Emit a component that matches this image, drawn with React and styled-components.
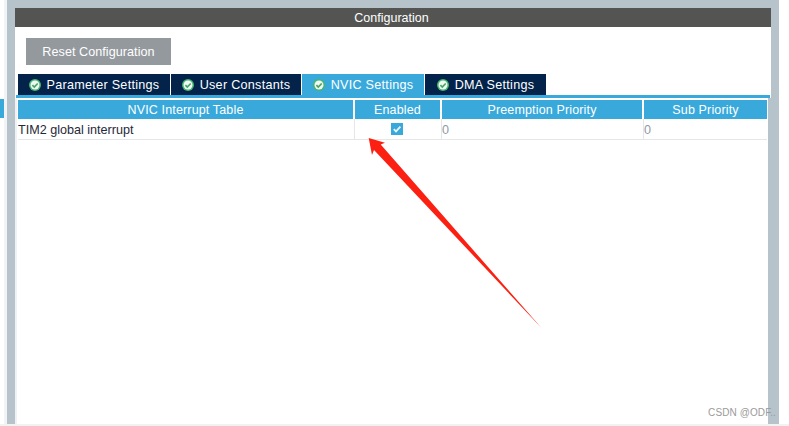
import styled, { createGlobalStyle } from 'styled-components';

const GlobalStyle = createGlobalStyle`
    html, body {
        margin: 0;
        padding: 0;
        background: #ffffff;
        overflow: hidden;
    }
    body {
        font-family: "Liberation Sans", Arial, sans-serif;
    }
`;

const Page = styled.div`
    position: relative;
    width: 789px;
    height: 426px;
    overflow: hidden;
    background: #ffffff;
`;

const Main = styled.div`
    display: flex;
    height: 424px;
`;

const BottomStrip = styled.div`
    height: 2px;
    background: #f1f2f2;
`;

const Gutter = styled.div`
    width: 7px;
    flex-shrink: 0;
    padding-top: 99px;
    box-sizing: border-box;
    background: linear-gradient(to right, #ffffff 4px, #f1f3f4 4px);
`;

const GutterMark = styled.div`
    width: 4px;
    height: 19px;
    background: #39a9dc;
`;

const Frame = styled.div`
    display: flex;
    flex-direction: column;
    width: 772px;
    flex-shrink: 0;
    box-sizing: border-box;
    padding: 8px 8px 0 8px;
    background: #b6c3ca;
`;

const TitleBar = styled.div`
    height: 19px;
    padding-right: 3px;
    background: #545553;
    color: #ffffff;
    font-size: 12.5px;
    line-height: 20px;
    text-align: center;
`;

const TopSection = styled.div`
    width: 756px;
    padding-top: 11px;
    box-sizing: border-box;
    background: #ffffff;
`;

const ResetButton = styled.button`
    display: block;
    width: 145px;
    height: 27px;
    margin: 0 0 9px 11px;
    padding: 0;
    border: 0;
    background: #94999e;
    color: #ffffff;
    font-family: inherit;
    font-size: 12.6px;
    letter-spacing: 0.05px;
`;

const TabBar = styled.div`
    display: flex;
    gap: 1px;
    width: 754px;
    margin-left: 1px;
    padding-left: 2px;
    box-sizing: border-box;
    border-bottom: 3px solid #39a9dc;
`;

const Tab = styled.div`
    display: flex;
    align-items: center;
    justify-content: center;
    gap: 6px;
    width: ${({ width }) => width}px;
    height: 21px;
    background: ${({ active }) => (active ? '#39a9dc' : '#03234b')};
    color: #ffffff;
    font-size: 12.6px;
    letter-spacing: 0.28px;
`;

const TableSection = styled.div`
    flex: 1;
    width: 753px;
    padding: 2px 0 0 1px;
    box-sizing: border-box;
    border-left: 2px solid #eff2f4;
    background: #ffffff;
`;

const Table = styled.div`
    display: grid;
    grid-template-columns: 335px 85px 200px 123px;
    column-gap: 2px;
    width: 749px;
`;

const HeadCell = styled.div`
    height: 19px;
    background: #39a9dc;
    color: #ffffff;
    font-size: 12.5px;
    line-height: 20px;
    letter-spacing: 0.15px;
    text-align: center;
`;

const BodyCell = styled.div`
    display: flex;
    align-items: center;
    justify-content: ${({ center }) => (center ? 'center' : 'flex-start')};
    height: 21px;
    margin-right: ${({ last }) => (last ? '0' : '-2px')};
    padding: ${({ center }) => (center ? '0 2px 0 0' : '1px 0 0 0')};
    box-sizing: border-box;
    border-bottom: 1px solid #e4e6e7;
    border-right: ${({ last }) => (last ? '0' : '1px solid #e4e6e7')};
    color: ${({ muted }) => (muted ? '#8e9aa8' : '#1f2a3a')};
    font-size: 12.6px;
`;

const CheckBox = styled.span`
    display: flex;
    align-items: center;
    justify-content: center;
    width: 12px;
    height: 12px;
    background: #39a9dc;
`;

const Arrow = styled.svg`
    position: absolute;
    left: 0;
    top: 0;
    pointer-events: none;
`;

const Watermark = styled.div`
    position: absolute;
    right: 13px;
    bottom: 8px;
    color: #9a9a9a;
    font-size: 10px;
    letter-spacing: 0.1px;
`;

const tabs = [
    { label: 'Parameter Settings', width: 152 },
    { label: 'User Constants', width: 130 },
    { label: 'NVIC Settings', width: 122, active: true },
    { label: 'DMA Settings', width: 121 },
];

function TabIcon() {
    return (
        <svg width="12" height="12" viewBox="0 0 12 12">
            <circle cx="6" cy="6" r="6" fill="#45b670" />
            <circle cx="6" cy="6" r="4.5" fill="#f2f7f3" />
            <path d="M3.4 6.1 L5.3 8 L8.7 4.5" fill="none" stroke="#45a468" strokeWidth="1.7" />
        </svg>
    );
}

export default function App() {
    return (
        <Page>
            <GlobalStyle />
            <Main>
                <Gutter>
                    <GutterMark />
                </Gutter>
                <Frame>
                    <TitleBar>Configuration</TitleBar>
                    <TopSection>
                        <ResetButton>Reset Configuration</ResetButton>
                        <TabBar>
                            {tabs.map((tab) => (
                                <Tab key={tab.label} width={tab.width} active={tab.active}>
                                    <TabIcon />
                                    {tab.label}
                                </Tab>
                            ))}
                        </TabBar>
                    </TopSection>
                    <TableSection>
                        <Table>
                            <HeadCell>NVIC Interrupt Table</HeadCell>
                            <HeadCell>Enabled</HeadCell>
                            <HeadCell>Preemption Priority</HeadCell>
                            <HeadCell>Sub Priority</HeadCell>
                            <BodyCell>TIM2 global interrupt</BodyCell>
                            <BodyCell center>
                                <CheckBox>
                                    <svg width="12" height="12" viewBox="0 0 12 12">
                                        <path d="M2.8 6.2 L5 8.4 L9.4 3.6" fill="none" stroke="#e8f5fb" strokeWidth="1.8" />
                                    </svg>
                                </CheckBox>
                            </BodyCell>
                            <BodyCell muted>0</BodyCell>
                            <BodyCell muted last>0</BodyCell>
                        </Table>
                    </TableSection>
                </Frame>
            </Main>
            <BottomStrip />
            <Arrow width="789" height="426" viewBox="0 0 789 426">
                <polygon
                    points="368.7,138 385,142.7 380.7,144.5 541.5,328 374,150 372,155"
                    fill="#fb2012"
                />
            </Arrow>
            <Watermark>CSDN @ODF..</Watermark>
        </Page>
    );
}
